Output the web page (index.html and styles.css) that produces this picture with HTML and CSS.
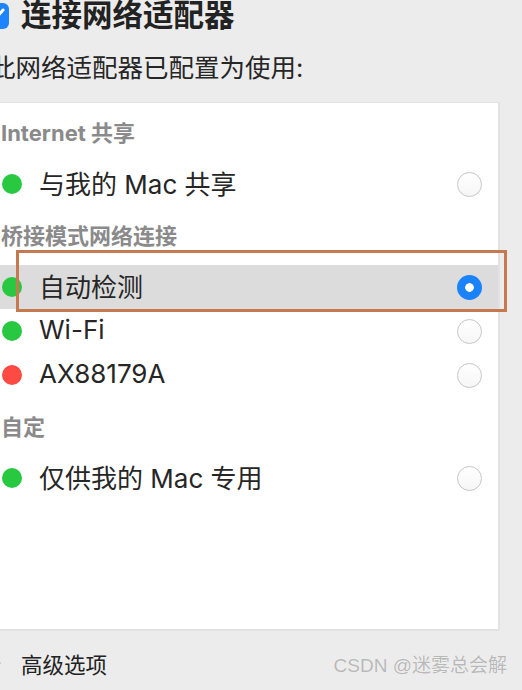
FILE: index.html
```html
<!DOCTYPE html>
<html>
	<head>
		<meta charset="utf-8">
		<meta name="viewport" content="width=device-width">
		<title>连接网络适配器</title>
		<link rel="stylesheet" href="styles.css">
	</head>

	<body>
		<header class="title">
			<span class="checkbox">
				<svg width="26" height="26" viewBox="0 0 26 26"><path d="M6 13.5l4.5 4.5L20 7" fill="none" stroke="#fff" stroke-width="3" stroke-linecap="round" stroke-linejoin="round"/></svg>
			</span>
			<h1>连接网络适配器</h1>
		</header>
		<p class="subtitle">此网络适配器已配置为使用:</p>

		<section class="panel">
			<h2 class="group">Internet 共享</h2>
			<div class="row">
				<span class="dot green"></span>
				<span class="name">与我的 Mac 共享</span>
				<span class="radio"></span>
			</div>

			<h2 class="group">桥接模式网络连接</h2>
			<div class="row selected">
				<span class="dot green"></span>
				<span class="name">自动检测</span>
				<span class="radio on"></span>
				<span class="mark"></span>
			</div>
			<div class="row">
				<span class="dot green"></span>
				<span class="name">Wi-Fi</span>
				<span class="radio"></span>
			</div>
			<div class="row">
				<span class="dot red"></span>
				<span class="name">AX88179A</span>
				<span class="radio"></span>
			</div>

			<h2 class="group">自定</h2>
			<div class="row">
				<span class="dot green"></span>
				<span class="name">仅供我的 Mac 专用</span>
				<span class="radio"></span>
			</div>
		</section>

		<footer class="footer">
			<span class="advanced"><span class="arrow"></span>高级选项</span>
			<span class="watermark">CSDN @迷雾总会解</span>
		</footer>
	</body>

</html>
```

FILE: styles.css
```css
html, body {
	margin: 0;
	background: #ececec;
	overflow: hidden;
}
body {
	font-family: Inter, "Noto Sans CJK SC", sans-serif;
	color: #262626;
	width: 522px;
	height: 690px;
}
.title {
	display: flex;
	align-items: center;
	gap: 12px;
	height: 30px;
}
.checkbox {
	display: block;
	flex: none;
	width: 26px;
	height: 26px;
	margin-left: -17px;
	margin-top: 2px;
	border-radius: 6px;
	background: #1d84fb;
}
.checkbox svg {
	display: block;
}
.title h1 {
	margin: 0;
	font-size: 30.5px;
	font-weight: 700;
	line-height: 30px;
	color: #222;
	white-space: nowrap;
}
.subtitle {
	margin: 23px 0 0 -10px;
	font-size: 25.5px;
	line-height: 30px;
	white-space: nowrap;
}
.panel {
	box-sizing: border-box;
	margin: 19px 0 0 -10px;
	width: 510px;
	height: 529px;
	background: #fff;
	border: 2px solid #e2e2e2;
	border-top-width: 1px;
}
.group {
	box-sizing: border-box;
	height: 59px;
	margin: 0;
	padding: 17px 0 0 9px;
	font-size: 22px;
	font-weight: 700;
	line-height: 26px;
	color: #8a8a8a;
}
.row {
	position: relative;
	display: flex;
	align-items: center;
	height: 44px;
	padding: 0 16px 0 10px;
	font-size: 26px;
}
.row.selected {
	background: #dcdcdc;
}
.dot {
	width: 20px;
	height: 20px;
	border-radius: 50%;
	margin-right: 17px;
}
.dot.green {
	background: #28c840;
}
.dot.red {
	background: #fd4a42;
}
.name {
	flex: 1;
	margin-top: -4px;
}
.radio {
	box-sizing: border-box;
	width: 25px;
	height: 25px;
	border-radius: 50%;
	border: 1px solid #c6c6c6;
	background: linear-gradient(#fff, #f6f6f6);
}
.radio.on {
	border: none;
	background: radial-gradient(circle, #fff 0 4px, #1a82fb 4.6px);
}
.mark {
	position: absolute;
	left: 24px;
	right: -9px;
	top: -15px;
	bottom: -3px;
	border: 3px solid #c5794e;
}
.footer {
	display: flex;
	justify-content: space-between;
	align-items: center;
	margin-top: 17px;
	height: 30px;
	padding-right: 15px;
}
.advanced {
	display: flex;
	align-items: center;
	font-size: 21.5px;
	color: #222;
}
.arrow {
	width: 0;
	height: 0;
	margin-left: -6px;
	margin-right: 20px;
	border-left: 7px solid #9a9a9a;
	border-top: 5px solid transparent;
	border-bottom: 5px solid transparent;
}
.watermark {
	font-family: "Liberation Sans", "Noto Sans CJK SC", sans-serif;
	font-size: 19px;
	color: #b8b8b8;
	text-shadow: 0 0 1px #fff;
}
```
